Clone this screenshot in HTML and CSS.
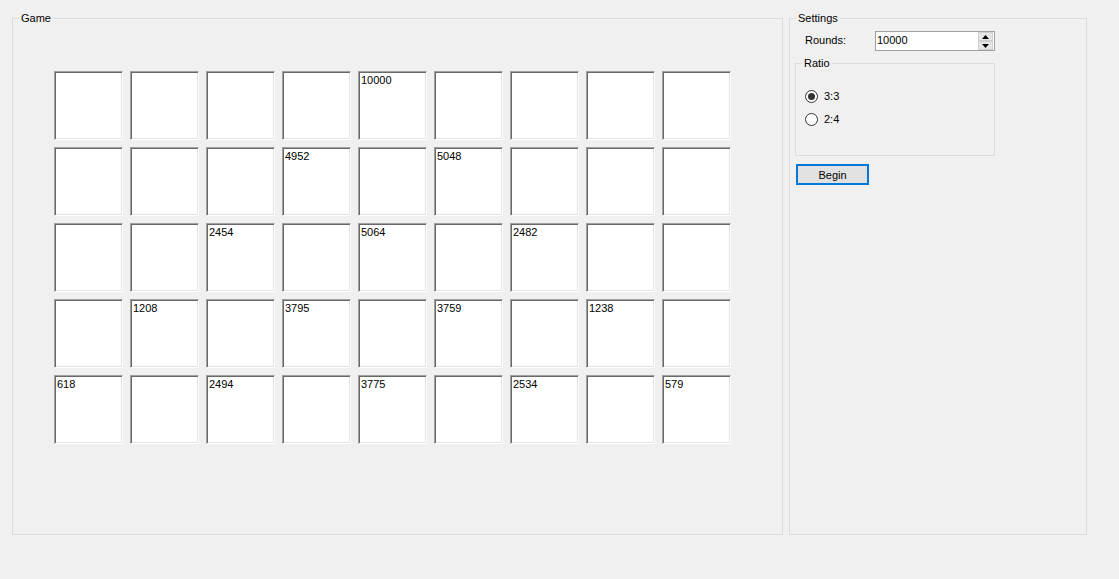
FILE: index.html
```html
<!DOCTYPE html>
<html>
<head>
<meta charset="utf-8">
<title>Game</title>
<link rel="stylesheet" href="styles.css">
</head>
<body>
<div class="window">
  <fieldset class="group game">
    <legend>Game</legend>
    <div class="board">
      <div class="cell"></div><div class="cell"></div><div class="cell"></div><div class="cell"></div><div class="cell">10000</div><div class="cell"></div><div class="cell"></div><div class="cell"></div><div class="cell"></div>
      <div class="cell"></div><div class="cell"></div><div class="cell"></div><div class="cell">4952</div><div class="cell"></div><div class="cell">5048</div><div class="cell"></div><div class="cell"></div><div class="cell"></div>
      <div class="cell"></div><div class="cell"></div><div class="cell">2454</div><div class="cell"></div><div class="cell">5064</div><div class="cell"></div><div class="cell">2482</div><div class="cell"></div><div class="cell"></div>
      <div class="cell"></div><div class="cell">1208</div><div class="cell"></div><div class="cell">3795</div><div class="cell"></div><div class="cell">3759</div><div class="cell"></div><div class="cell">1238</div><div class="cell"></div>
      <div class="cell">618</div><div class="cell"></div><div class="cell">2494</div><div class="cell"></div><div class="cell">3775</div><div class="cell"></div><div class="cell">2534</div><div class="cell"></div><div class="cell">579</div>
    </div>
  </fieldset>
  <fieldset class="group settings">
    <legend>Settings</legend>
    <div class="rounds">
      <span class="rounds-label">Rounds:</span>
      <div class="spin">
        <span class="spin-value">10000</span>
        <div class="spin-buttons">
          <span class="spin-btn"><svg width="7" height="4" viewBox="0 0 7 4"><path d="M3.5 0 L7 4 L0 4 Z" fill="#000"/></svg></span>
          <span class="spin-btn"><svg width="7" height="4" viewBox="0 0 7 4"><path d="M0 0 L7 0 L3.5 4 Z" fill="#000"/></svg></span>
        </div>
      </div>
    </div>
    <fieldset class="group ratio">
      <legend>Ratio</legend>
      <div class="radios">
        <div class="radio-row"><span class="radio checked"></span><span>3:3</span></div>
        <div class="radio-row"><span class="radio"></span><span>2:4</span></div>
      </div>
    </fieldset>
    <button class="begin">Begin</button>
  </fieldset>
</div>
</body>
</html>
```
FILE: styles.css
```css
html, body {
  margin: 0;
  padding: 0;
}
body {
  background: #f0f0f0;
  font-family: "Liberation Sans", Arial, sans-serif;
  font-size: 11px;
  line-height: 13px;
  color: #000;
}
.window {
  display: flex;
  gap: 6px;
  padding: 12px 0 0 12px;
}
.group {
  box-sizing: border-box;
  margin: 0;
  padding: 0;
  border: 1px solid #dcdcdc;
  min-width: 0;
}
.group > legend {
  margin-left: 6px;
  padding: 0 2px;
  line-height: 13px;
}
.game {
  width: 771px;
  height: 523px;
}
.board {
  display: grid;
  grid-template-columns: repeat(9, 69px);
  grid-auto-rows: 69px;
  gap: 7px;
  padding: 46px 0 0 41px;
}
.cell {
  box-sizing: border-box;
  background: #fff;
  border: 1px solid;
  border-color: #a0a0a0 #fff #fff #a0a0a0;
  box-shadow: inset 1px 1px 0 #696969, inset -1px -1px 0 #e3e3e3;
  padding: 2px 2px;
}
.settings {
  width: 298px;
  height: 523px;
}
.rounds {
  display: flex;
  align-items: flex-start;
  margin-top: 6px;
  padding-left: 15px;
}
.rounds-label {
  width: 70px;
  padding-top: 3px;
}
.spin {
  box-sizing: border-box;
  width: 120px;
  height: 20px;
  border: 1px solid #a0a0a0;
  background: #fff;
  display: flex;
  align-items: flex-start;
  justify-content: space-between;
}
.spin-value {
  padding: 2px 0 0 1px;
}
.spin-buttons {
  display: flex;
  flex-direction: column;
  margin-right: 1px;
  width: 15px;
  height: 18px;
}
.spin-btn {
  box-sizing: border-box;
  flex: 1;
  display: flex;
  align-items: center;
  justify-content: center;
  background: #e5e5e5;
  border: 1px solid #cfcfcf;
}
.ratio {
  width: 200px;
  height: 99px;
  margin: 6px 0 0 5px;
}
.radios {
  display: flex;
  flex-direction: column;
  gap: 10px;
  padding: 20px 0 0 9px;
}
.radio-row {
  display: flex;
  align-items: center;
  gap: 6px;
}
.radio {
  box-sizing: border-box;
  width: 13px;
  height: 13px;
  border: 1px solid #333;
  border-radius: 50%;
  background: #fff;
  display: flex;
  align-items: center;
  justify-content: center;
}
.radio.checked::after {
  content: "";
  width: 7px;
  height: 7px;
  border-radius: 50%;
  background: #333;
}
.begin {
  display: block;
  box-sizing: border-box;
  width: 73px;
  height: 21px;
  margin: 8px 0 0 6px;
  padding: 1px 0 0;
  border: 2px solid #0078d7;
  background: #e1e1e1;
  font-family: "Liberation Sans", Arial, sans-serif;
  font-size: 11px;
  line-height: 13px;
  color: #000;
}
```
